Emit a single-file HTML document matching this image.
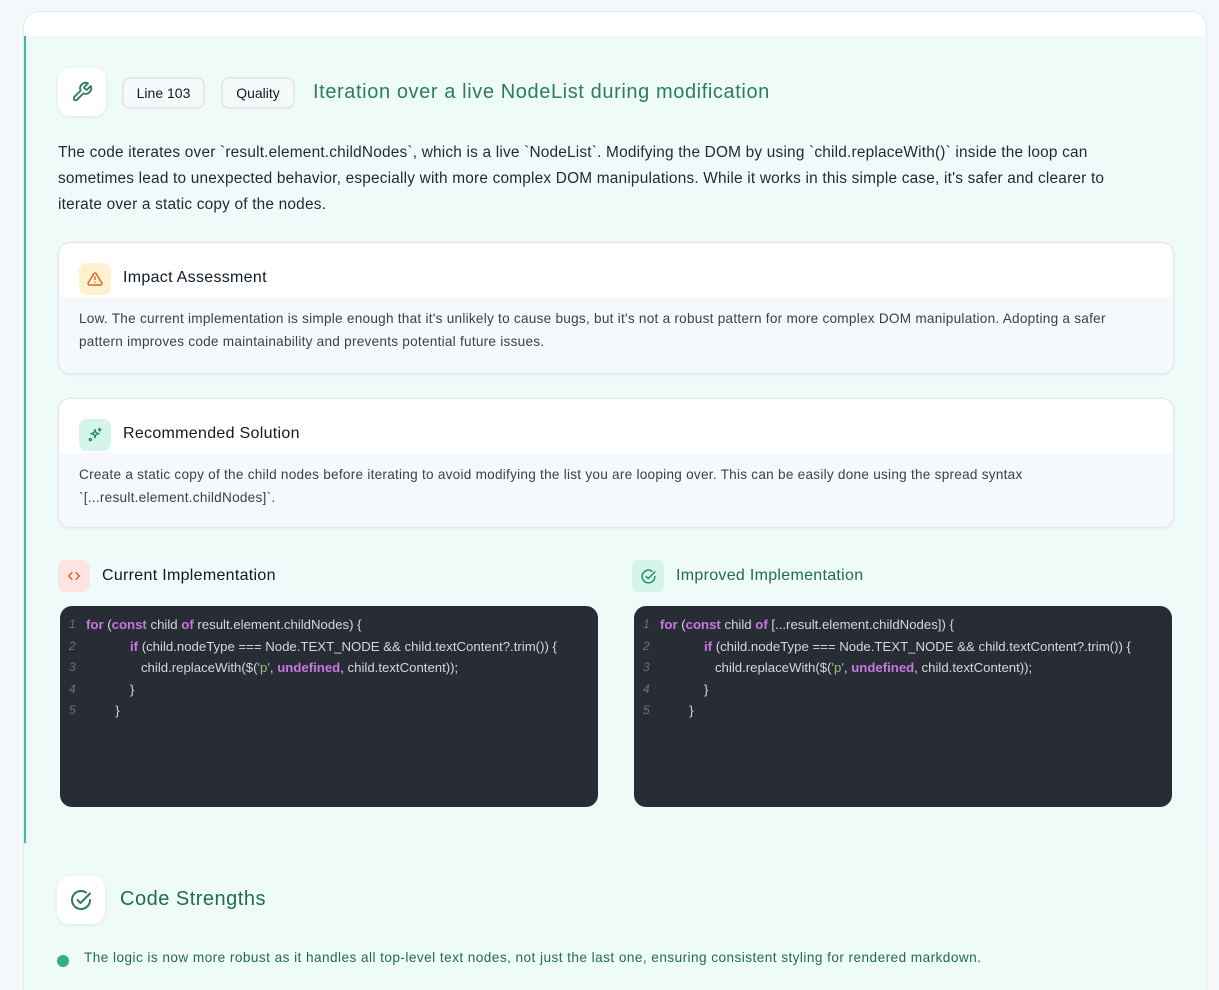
<!DOCTYPE html>
<html><head><meta charset="utf-8"><style>
*{box-sizing:border-box;margin:0;padding:0}
html,body{width:1219px;height:990px;overflow:hidden}
body{background:#f4f8fa;font-family:"Liberation Sans",sans-serif;color:#1f2937;position:relative}
.card{position:absolute;left:23px;top:11px;width:1184px;height:979px;background:#fff;border:1px solid #e3e8ec;border-bottom:none;border-radius:16px 16px 0 0;overflow:hidden}
.issue{position:absolute;left:0;top:24px;width:1184px;height:807px;background:#effbf8;border-left:2px solid #3dbd98}
.strong{position:absolute;left:0;top:831px;width:1184px;height:150px;background:#effcf5}
.ab{position:absolute}
.ibox{position:absolute;background:#fff;border-radius:12px;box-shadow:0 1px 4px rgba(0,0,0,.08);display:flex;align-items:center;justify-content:center}
.badge{position:absolute;top:41px;height:32px;border:2px solid #e3e8ea;border-radius:8px;background:#f7fafb;font-size:14px;color:#111827;display:flex;align-items:center;justify-content:center}
.sub{position:absolute;left:32px;width:1116px;background:#fff;border:1px solid #dfe5e8;border-radius:12px;overflow:hidden;box-shadow:0 1px 3px rgba(0,0,0,.06)}
.sub .bd{position:absolute;left:0;right:0;top:54px;bottom:0;background:#f6f9fb;padding:10px 20px;font-size:13.6px;letter-spacing:.25px;line-height:23px;color:#374151;white-space:nowrap}
.sub .ic{position:absolute;left:20px;top:20px;width:32px;height:32px;border-radius:8px;display:flex;align-items:center;justify-content:center}
.sub .tt{position:absolute;left:64px;top:26px;font-size:16px;letter-spacing:.3px;color:#111827}
.code{position:absolute;top:570px;width:538px;height:201px;background:#282c35;border-radius:12px;font-size:13.2px;color:#d4d7dd;padding-top:8px}
.code div{height:21.6px;line-height:21.6px;position:relative;white-space:pre}
.code i{position:absolute;left:9px;color:#6b7280;font-size:12px}
.code span.t{position:absolute;left:26px}
.k{color:#c678dd;font-weight:bold}.s{color:#98c379}
</style></head><body>
<div class="card">
 <div class="issue">
  <div class="ibox" style="left:32px;top:32px;width:48px;height:48px"><svg width="22" height="22" viewBox="0 0 24 24" fill="none" stroke="#2e7d5f" stroke-width="2" stroke-linecap="round" stroke-linejoin="round"><path d="M14.7 6.3a1 1 0 0 0 0 1.4l1.6 1.6a1 1 0 0 0 1.4 0l3.77-3.77a6 6 0 0 1-7.94 7.94l-6.91 6.91a2.12 2.12 0 0 1-3-3l6.91-6.91a6 6 0 0 1 7.940-7.94l-3.76 3.76z"/></svg></div>
  <div class="badge" style="left:96px;width:83px">Line 103</div>
  <div class="badge" style="left:195px;width:74px">Quality</div>
  <div class="ab" style="left:287px;top:45px;font-size:20px;letter-spacing:.6px;color:#2b7d5e">Iteration over a live NodeList during modification</div>
  <div class="ab" style="left:32px;top:104px;font-size:15.4px;letter-spacing:.2px;line-height:26px;color:#1f2937;white-space:nowrap">The code iterates over `result.element.childNodes`, which is a live `NodeList`. Modifying the DOM by using `child.replaceWith()` inside the loop can<br>sometimes lead to unexpected behavior, especially with more complex DOM manipulations. While it works in this simple case, it's safer and clearer to<br>iterate over a static copy of the nodes.</div>
  <div class="sub" style="top:206px;height:132px">
   <div class="ic" style="background:#fdf1cf"><svg width="16" height="16" viewBox="0 0 24 24" fill="none" stroke="#e2622b" stroke-width="2.2" stroke-linecap="round" stroke-linejoin="round"><path d="M10.3 3.9 1.8 18a2 2 0 0 0 1.7 3h17a2 2 0 0 0 1.7-3L13.7 3.9a2 2 0 0 0-3.4 0z"/><path d="M12 9v4M12 17h.01"/></svg></div>
   <div class="tt">Impact Assessment</div>
   <div class="bd">Low. The current implementation is simple enough that it's unlikely to cause bugs, but it's not a robust pattern for more complex DOM manipulation. Adopting a safer<br>pattern improves code maintainability and prevents potential future issues.</div>
  </div>
  <div class="sub" style="top:362px;height:130px">
   <div class="ic" style="background:#d5f5e9"><svg width="16" height="16" viewBox="0 0 24 24" fill="none" stroke="#1f8a6a" stroke-width="2" stroke-linecap="round" stroke-linejoin="round"><path d="M12 4l1.5 4.5L18 10l-4.5 1.5L12 16l-1.5-4.5L6 10l4.5-1.5z"/><path d="M19 2v4M17 4h4"/><circle cx="5" cy="19" r="1.6"/></svg></div>
   <div class="tt">Recommended Solution</div>
   <div class="bd">Create a static copy of the child nodes before iterating to avoid modifying the list you are looping over. This can be easily done using the spread syntax<br>`[...result.element.childNodes]`.</div>
  </div>
  <div class="ab" style="left:32px;top:524px;width:32px;height:32px;border-radius:8px;background:#fde4e1;display:flex;align-items:center;justify-content:center"><svg width="16" height="16" viewBox="0 0 24 24" fill="none" stroke="#e2622b" stroke-width="2.2" stroke-linecap="round" stroke-linejoin="round"><path d="M9 7l-5 5 5 5M15 7l5 5-5 5"/></svg></div>
  <div class="ab" style="left:76px;top:531px;font-size:16px;letter-spacing:.3px;color:#111827">Current Implementation</div>
  <div class="ab" style="left:606px;top:524px;width:32px;height:32px;border-radius:8px;background:#d5f5e9;display:flex;align-items:center;justify-content:center"><svg width="17" height="17" viewBox="0 0 24 24" fill="none" stroke="#1f8a6a" stroke-width="2" stroke-linecap="round" stroke-linejoin="round"><path d="M21 12a9 9 0 1 1-4-7.5"/><path d="M8.5 12l3 3L21 5.5"/></svg></div>
  <div class="ab" style="left:650px;top:531px;font-size:16px;letter-spacing:.3px;color:#1f6b55">Improved Implementation</div>
  <div class="code" style="left:34px">
   <div><i>1</i><span class="t"><b class="k">for</b> (<b class="k">const</b> child <b class="k">of</b> result.element.childNodes) {</span></div>
   <div><i>2</i><span class="t">            <b class="k">if</b> (child.nodeType === Node.TEXT_NODE &amp;&amp; child.textContent?.trim()) {</span></div>
   <div><i>3</i><span class="t">               child.replaceWith($(<span class="s">'p'</span>, <b class="k">undefined</b>, child.textContent));</span></div>
   <div><i>4</i><span class="t">            }</span></div>
   <div><i>5</i><span class="t">        }</span></div>
  </div>
  <div class="code" style="left:608px">
   <div><i>1</i><span class="t"><b class="k">for</b> (<b class="k">const</b> child <b class="k">of</b> [...result.element.childNodes]) {</span></div>
   <div><i>2</i><span class="t">            <b class="k">if</b> (child.nodeType === Node.TEXT_NODE &amp;&amp; child.textContent?.trim()) {</span></div>
   <div><i>3</i><span class="t">               child.replaceWith($(<span class="s">'p'</span>, <b class="k">undefined</b>, child.textContent));</span></div>
   <div><i>4</i><span class="t">            }</span></div>
   <div><i>5</i><span class="t">        }</span></div>
  </div>
 </div>
 <div class="strong">
  <div class="ibox" style="left:33px;top:33px;width:48px;height:48px"><svg width="24" height="24" viewBox="0 0 24 24" fill="none" stroke="#2b7d5e" stroke-width="2" stroke-linecap="round" stroke-linejoin="round"><path d="M21 12a9 9 0 1 1-4-7.5"/><path d="M8.5 12l3 3L21 5.5"/></svg></div>
  <div class="ab" style="left:96px;top:45px;font-size:20px;letter-spacing:.5px;color:#1f6b55">Code Strengths</div>
  <div class="ab" style="left:33px;top:112px;width:12px;height:12px;border-radius:50%;background:#2fae8c"></div>
  <div class="ab" style="left:60px;top:107px;font-size:13.6px;letter-spacing:.45px;color:#1f6b55;white-space:nowrap">The logic is now more robust as it handles all top-level text nodes, not just the last one, ensuring consistent styling for rendered markdown.</div>
 </div>
</div>
</body></html>
